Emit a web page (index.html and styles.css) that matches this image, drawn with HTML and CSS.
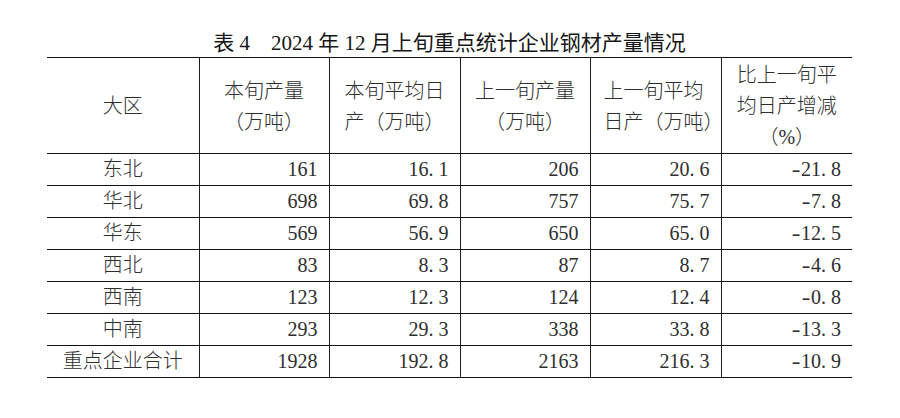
FILE: index.html
```html
<!DOCTYPE html>
<html lang="zh-CN">
<head>
<meta charset="utf-8">
<title>表4 2024年12月上旬重点统计企业钢材产量情况</title>
<link rel="stylesheet" href="styles.css">
</head>
<body>
<div class="page">
  <h1 class="title">表 4　2024 年 12 月上旬重点统计企业钢材产量情况</h1>
  <table class="data">
    <colgroup>
      <col class="c-region">
      <col class="c-num">
      <col class="c-num2">
      <col class="c-num">
      <col class="c-num2">
      <col class="c-num2">
    </colgroup>
    <thead>
      <tr class="head">
        <th>大区</th>
        <th>本旬产量<br>（万吨）</th>
        <th>本旬平均日<br>产（万吨）</th>
        <th>上一旬产量<br>（万吨）</th>
        <th class="hl">上一旬平均<br>日产（万吨）</th>
        <th>比上一旬平<br>均日产增减<br>（%）</th>
      </tr>
    </thead>
    <tbody>
      <tr><td class="name">东北</td><td>161</td><td>16<span class="pt">.</span>1</td><td>206</td><td>20<span class="pt">.</span>6</td><td><span class="mn">-</span>21<span class="pt">.</span>8</td></tr>
      <tr><td class="name">华北</td><td>698</td><td>69<span class="pt">.</span>8</td><td>757</td><td>75<span class="pt">.</span>7</td><td><span class="mn">-</span>7<span class="pt">.</span>8</td></tr>
      <tr><td class="name">华东</td><td>569</td><td>56<span class="pt">.</span>9</td><td>650</td><td>65<span class="pt">.</span>0</td><td><span class="mn">-</span>12<span class="pt">.</span>5</td></tr>
      <tr><td class="name">西北</td><td>83</td><td>8<span class="pt">.</span>3</td><td>87</td><td>8<span class="pt">.</span>7</td><td><span class="mn">-</span>4<span class="pt">.</span>6</td></tr>
      <tr><td class="name">西南</td><td>123</td><td>12<span class="pt">.</span>3</td><td>124</td><td>12<span class="pt">.</span>4</td><td><span class="mn">-</span>0<span class="pt">.</span>8</td></tr>
      <tr><td class="name">中南</td><td>293</td><td>29<span class="pt">.</span>3</td><td>338</td><td>33<span class="pt">.</span>8</td><td><span class="mn">-</span>13<span class="pt">.</span>3</td></tr>
      <tr><td class="name">重点企业合计</td><td>1928</td><td>192<span class="pt">.</span>8</td><td>2163</td><td>216<span class="pt">.</span>3</td><td><span class="mn">-</span>10<span class="pt">.</span>9</td></tr>
    </tbody>
  </table>
</div>
</body>
</html>
```
FILE: styles.css
```css
html, body {
  margin: 0;
  padding: 0;
  background: #ffffff;
}

body {
  font-family: "Liberation Serif", "Noto Sans CJK SC", serif;
  color: #2e2e2e;
}

.page {
  width: 805px;
  margin-left: 47px;
  padding-top: 29px;
}

.title {
  margin: 0;
  height: 28px;
  line-height: 28px;
  font-size: 21px;
  font-weight: 400;
  text-align: center;
  color: #161616;
  white-space: nowrap;
}

.data {
  width: 805px;
  border-collapse: collapse;
  table-layout: fixed;
  font-size: 20px;
}

.c-region { width: 152px; }
.c-num { width: 130px; }
.c-num2 { width: 131px; }

.data th,
.data td {
  padding: 0;
  border-top: 1px solid #111;
  border-bottom: 1px solid #111;
  border-left: 1px solid #1c1c1c;
  border-right: 1px solid #1c1c1c;
}

.data th:first-child,
.data td:first-child {
  border-left: none;
}

.data th:last-child,
.data td:last-child {
  border-right: none;
}

.head {
  height: 95px;
}

.head th {
  font-weight: 300;
  line-height: 31px;
  text-align: center;
  vertical-align: middle;
  padding-top: 2px;
}

.head th.hl {
  text-align: left;
  padding-left: 13px;
}

.data tbody tr {
  height: 32px;
}

.data td {
  text-align: right;
  padding-right: 11px;
  line-height: 31px;
  vertical-align: middle;
}

.data td.name {
  text-align: center;
  padding-right: 0;
  font-weight: 300;
}

.pt {
  display: inline-block;
  width: 10px;
  text-align: left;
  text-indent: 0;
}

.mn {
  display: inline-block;
  width: 10px;
  text-align: center;
  transform: scaleX(1.3);
  transform-origin: center;
}
```
